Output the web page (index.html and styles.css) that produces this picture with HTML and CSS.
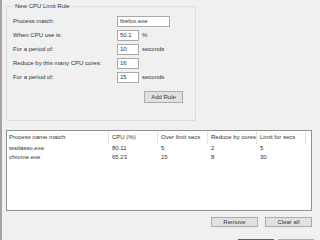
FILE: index.html
```html
<!DOCTYPE html>
<html lang="en">
<head>
    <meta charset="UTF-8">
    <meta name="viewport" content="width=device-width, initial-scale=1.0">
    <title>CPU Limit Rules</title>
    <link rel="stylesheet" href="styles.css">
</head>
<body>
    <div class="window">
        <fieldset class="group">
            <legend class="group-title">New CPU Limit Rule</legend>

            <div class="form-grid">
                <label class="label">Process match:</label>
                <div class="field"><input class="input input-wide" type="text" value="firefox.exe"></div>

                <label class="label">When CPU use is:</label>
                <div class="field"><input class="input" type="text" value="50.1"><span class="unit">%</span></div>

                <label class="label">For a period of:</label>
                <div class="field"><input class="input" type="text" value="10"><span class="unit">seconds</span></div>

                <label class="label">Reduce by this many CPU cores:</label>
                <div class="field"><input class="input" type="text" value="16"></div>

                <label class="label">For a period of:</label>
                <div class="field"><input class="input" type="text" value="15"><span class="unit">seconds</span></div>
            </div>

            <div class="group-actions">
                <button class="btn btn-add">Add Rule</button>
            </div>
        </fieldset>

        <div class="list">
            <div class="list-row list-header">
                <div class="cell">Process name match</div>
                <div class="cell">CPU (%)</div>
                <div class="cell">Over limit secs</div>
                <div class="cell">Reduce by cores</div>
                <div class="cell">Limit for secs</div>
            </div>
            <div class="list-row">
                <div class="cell">testlasso.exe</div>
                <div class="cell">80.11</div>
                <div class="cell">5</div>
                <div class="cell">2</div>
                <div class="cell">5</div>
            </div>
            <div class="list-row">
                <div class="cell">chrome.exe</div>
                <div class="cell">65.23</div>
                <div class="cell">15</div>
                <div class="cell">8</div>
                <div class="cell">30</div>
            </div>
        </div>

        <div class="list-actions">
            <button class="btn btn-list">Remove</button>
            <button class="btn btn-list">Clear all</button>
        </div>

        <!-- OK / Cancel, only their top edge is visible -->
        <div class="dialog-actions">
            <button class="btn btn-dialog btn-default" aria-label="OK"></button>
            <button class="btn btn-dialog" aria-label="Cancel"></button>
        </div>
    </div>
</body>
</html>
```

FILE: styles.css
```css
html, body {
    margin: 0;
    padding: 0;
    width: 320px;
    height: 240px;
    overflow: hidden;
    background-color: #f0f0f0;
}
body {
    font-family: "Liberation Sans", Arial, sans-serif;
    font-size: 6px;
    color: #333;
}
.window {
    box-sizing: border-box;
    height: 240px;
    overflow: hidden;
    border-left: 2px solid #a3a3a3;
    padding: 0 0 0 4px;
}
.group {
    box-sizing: border-box;
    width: 190px;
    height: 118px;
    margin: 3px 0 0 0;
    padding: 5px 12px 0 6px;
    border: 1px solid #dcdcdc;
    border-radius: 2px;
}
.group-title {
    padding: 0 1px;
    margin-left: 1px;
    font-size: 6px;
}
.form-grid {
    display: grid;
    grid-template-columns: 104px auto;
    grid-auto-rows: 14px;
    align-items: center;
}
.label {
    line-height: 11px;
}
.field {
    display: flex;
    align-items: center;
}
.input {
    box-sizing: border-box;
    width: 22px;
    height: 11px;
    margin: 0;
    padding: 0 2px;
    border: 1px solid #a9a9a9;
    background: #fff;
    font-family: inherit;
    font-size: 6px;
    color: #333;
}
.input-wide {
    width: 53px;
}
.unit {
    margin-left: 3px;
}
.group-actions {
    display: flex;
    justify-content: flex-end;
    margin-top: 7px;
}
.btn {
    box-sizing: border-box;
    margin: 0;
    padding: 0;
    background: #e1e1e1;
    border: 1px solid #adadad;
    font-family: inherit;
    font-size: 6px;
    color: #333;
}
.btn-add {
    width: 39px;
    height: 12px;
}
.list {
    box-sizing: border-box;
    width: 306px;
    height: 81px;
    margin-top: 9px;
    background: #fff;
    border: 1px solid #8f8f8f;
}
.list-row {
    display: grid;
    grid-template-columns: 102px 49px 50px 49px 49px;
    height: 9px;
    line-height: 9px;
}
.list-header {
    height: 13px;
    line-height: 13px;
}
.list-header .cell {
    border-right: 1px solid #e5e5e5;
}
.cell {
    padding-left: 3px;
    white-space: nowrap;
    overflow: hidden;
}
.cell:first-child {
    padding-left: 2px;
}
.list-actions {
    display: flex;
    justify-content: flex-end;
    gap: 7px;
    width: 306px;
    margin-top: 6px;
}
.btn-list {
    width: 47px;
    height: 10px;
}
.dialog-actions {
    display: flex;
    justify-content: flex-end;
    gap: 4px;
    width: 308px;
    margin-top: 12px;
}
.btn-dialog {
    width: 36px;
    height: 12px;
}
.btn-default {
    border-color: #0078d7;
}
```
